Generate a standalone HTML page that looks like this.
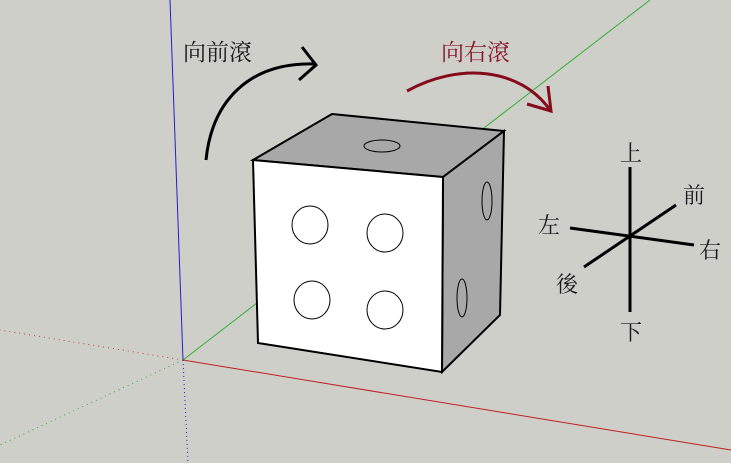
<!DOCTYPE html>
<html><head><meta charset="utf-8"><style>
html,body{margin:0;padding:0;width:731px;height:463px;overflow:hidden;background:#cfcfca}
svg text{font-family:"Liberation Serif","Noto Serif CJK SC",serif}
</style></head><body>
<svg width="731" height="463" viewBox="0 0 731 463" xmlns="http://www.w3.org/2000/svg">
<rect width="731" height="463" fill="#cfcfca"/>
<line x1="183" y1="360" x2="170" y2="0" stroke="#2020c8" stroke-width="1"/>
<line x1="183" y1="360" x2="650" y2="0" stroke="#30b030" stroke-width="1"/>
<line x1="183" y1="360" x2="731" y2="450" stroke="#c02020" stroke-width="1"/>
<line x1="183" y1="360" x2="0" y2="330" stroke="#c04040" stroke-width="1" stroke-dasharray="1,4"/>
<line x1="183" y1="360" x2="0" y2="445" stroke="#30b030" stroke-width="1" stroke-dasharray="1,4"/>
<line x1="183" y1="360" x2="188" y2="463" stroke="#2020c8" stroke-width="1" stroke-dasharray="1,3"/>
<polygon points="253,160 332,114 504,131 443,177" fill="#a8a8a8" stroke="#000" stroke-width="2"/>
<polygon points="443,177 504,131 500,315 442,372" fill="#a8a8a8" stroke="#000" stroke-width="2"/>
<polygon points="253,160 443,177 442,372 258,343" fill="#fff" stroke="#000" stroke-width="2"/>
<ellipse cx="382" cy="146" rx="18" ry="6" fill="none" stroke="#000"/>
<ellipse cx="310" cy="225" rx="18" ry="19" fill="none" stroke="#000"/>
<ellipse cx="385" cy="233" rx="18" ry="19" fill="none" stroke="#000"/>
<ellipse cx="312" cy="300" rx="18" ry="19" fill="none" stroke="#000"/>
<ellipse cx="385" cy="310" rx="18" ry="19" fill="none" stroke="#000"/>
<ellipse cx="487" cy="201" rx="5" ry="19" fill="none" stroke="#000"/>
<ellipse cx="462" cy="298" rx="5" ry="19" fill="none" stroke="#000"/>
<path d="M206,160 C212,100 250,62 315,64" fill="none" stroke="#000" stroke-width="3"/>
<path d="M302,47 L316,65 L299,80" fill="none" stroke="#000" stroke-width="3"/>
<path d="M407,91 C460,62 520,68 550,110" fill="none" stroke="#850a1a" stroke-width="3"/>
<path d="M548,86 L551,111 L527,104" fill="none" stroke="#850a1a" stroke-width="3"/>
<text x="183" y="60" font-size="23" fill="#1a1a1a">向前滾</text>
<text x="441" y="60" font-size="23" fill="#8a1a2a">向右滾</text>
<line x1="630" y1="167" x2="630" y2="312" stroke="#000" stroke-width="3"/>
<line x1="570" y1="228" x2="694" y2="245" stroke="#000" stroke-width="3"/>
<line x1="584" y1="267" x2="676" y2="205" stroke="#000" stroke-width="3"/>
<text x="620" y="161" font-size="22" fill="#1a1a1a">上</text>
<text x="620" y="340" font-size="22" fill="#1a1a1a">下</text>
<text x="538" y="233" font-size="22" fill="#1a1a1a">左</text>
<text x="699" y="258" font-size="22" fill="#1a1a1a">右</text>
<text x="683" y="203" font-size="22" fill="#1a1a1a">前</text>
<text x="556" y="292" font-size="22" fill="#1a1a1a">後</text>
</svg>
</body></html>
